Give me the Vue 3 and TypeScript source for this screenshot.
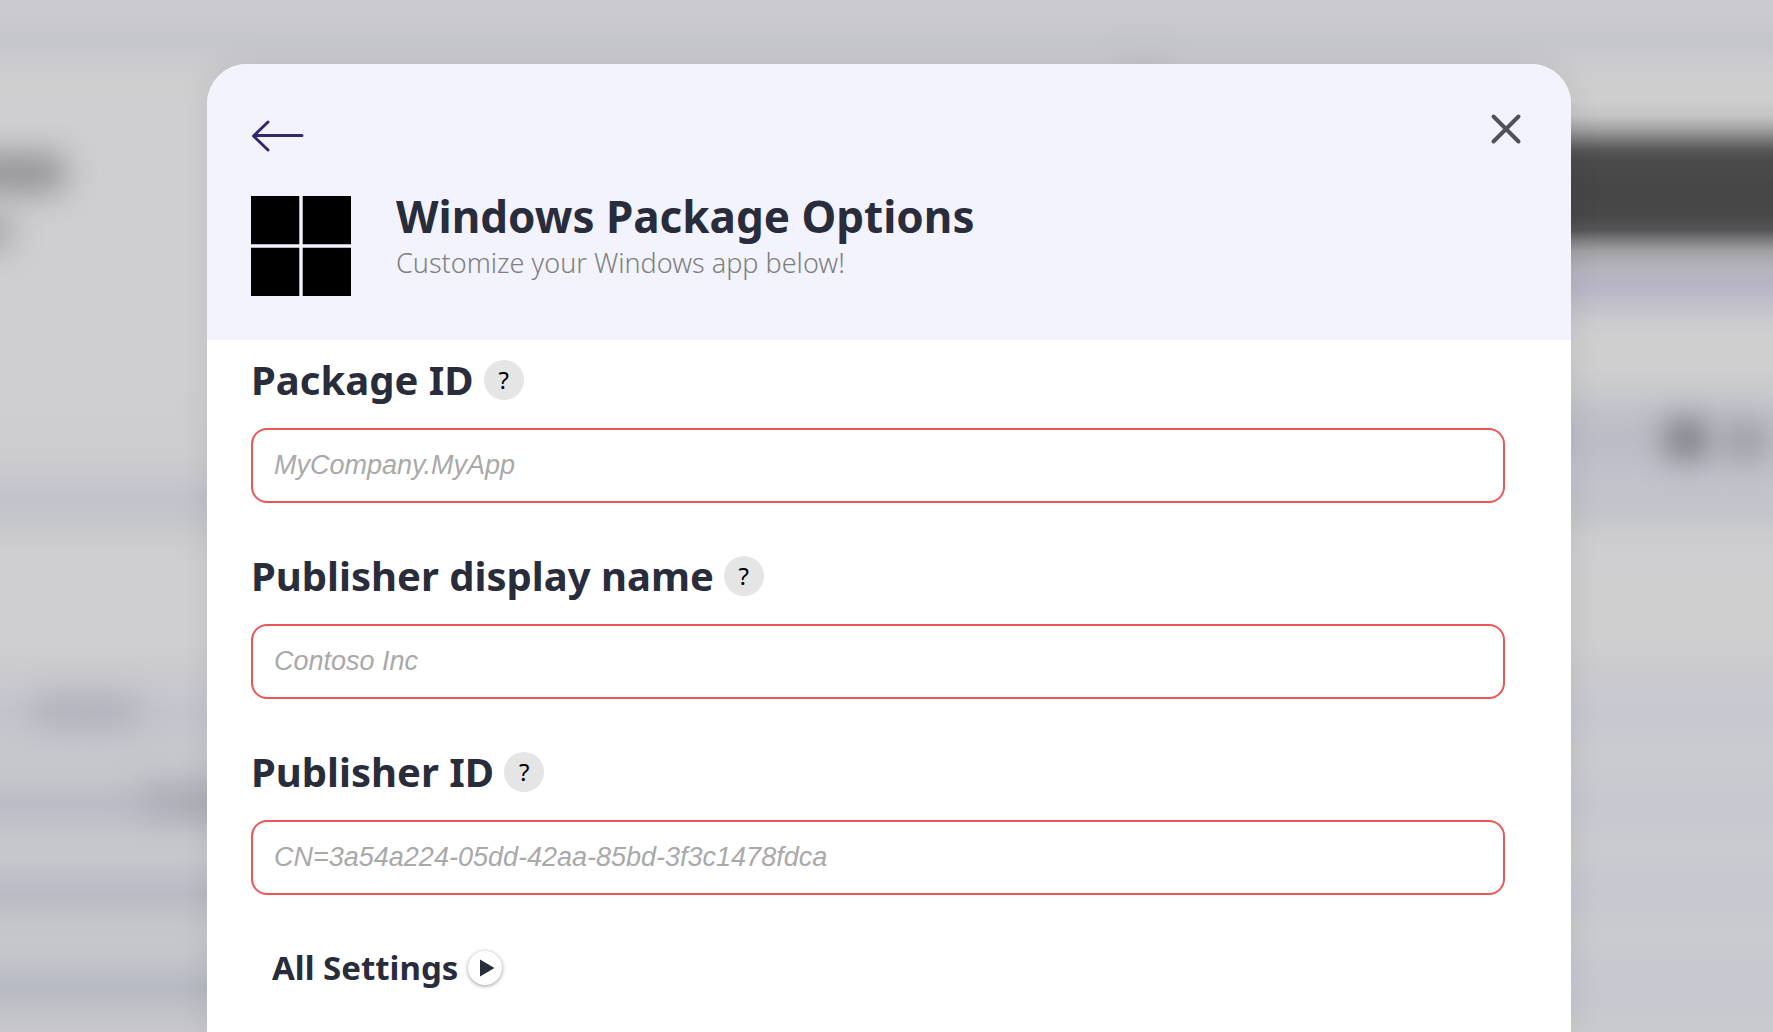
<script setup lang="ts">
import { ref } from 'vue'

interface Field {
  id: string
  label: string
  placeholder: string
}

const fields: Field[] = [
  { id: 'package-id', label: 'Package ID', placeholder: 'MyCompany.MyApp' },
  { id: 'publisher-name', label: 'Publisher display name', placeholder: 'Contoso Inc' },
  { id: 'publisher-id', label: 'Publisher ID', placeholder: 'CN=3a54a224-05dd-42aa-85bd-3f3c1478fdca' },
]

const values = ref<Record<string, string>>({
  'package-id': '',
  'publisher-name': '',
  'publisher-id': '',
})
</script>

<template>
  <div class="page">
    <div class="backdrop" aria-hidden="true">
      <div class="pane pane-left"></div>
      <div class="pane pane-right"></div>
      <span class="blob heading-line"></span>
      <span class="blob heading-tail"></span>
      <span class="blob item-one"></span>
      <span class="blob item-two"></span>
      <span class="blob icon-one"></span>
      <span class="blob icon-two"></span>
      <span class="blob top-mark"></span>
    </div>

    <section class="dialog" role="dialog" aria-modal="true" aria-labelledby="dialog-title">
      <header class="dialog-header">
        <div class="nav-row">
          <button class="icon-button" type="button" aria-label="Back">
            <svg width="54" height="34" viewBox="0 0 54 34" fill="none" stroke="#34286b" stroke-width="3" stroke-linecap="round" stroke-linejoin="round">
              <path d="M51 16.5H3M17 3L2.500 17L17 31" />
            </svg>
          </button>
          <button class="icon-button close" type="button" aria-label="Close">
            <svg width="32" height="32" viewBox="0 0 32 32" fill="none" stroke="#50515b" stroke-width="4" stroke-linecap="round">
              <path d="M3.500 3.500L28.500 28.500M28.500 3.500L3.500 28.500" />
            </svg>
          </button>
        </div>
        <div class="title-row">
          <svg class="logo" width="100" height="100" viewBox="0 0 100 100" aria-hidden="true">
            <path d="M0 0H48.300V48.300H0ZM51.700 0H100V48.300H51.700ZM0 51.700H48.300V100H0ZM51.700 51.700H100V100H51.700Z" />
          </svg>
          <div class="titles">
            <h1 id="dialog-title">Windows Package Options</h1>
            <p>Customize your Windows app below!</p>
          </div>
        </div>
      </header>

      <form class="dialog-form" @submit.prevent>
        <div v-for="field in fields" :key="field.id" class="field">
          <div class="label-row">
            <label :for="field.id">{{ field.label }}</label>
            <button class="help" type="button" :aria-label="`About ${field.label}`">?</button>
          </div>
          <input :id="field.id" v-model="values[field.id]" type="text" :placeholder="field.placeholder" required />
        </div>
        <button class="all-settings" type="button">
          <span>All Settings</span>
          <span class="disclosure">
            <svg width="16" height="18" viewBox="0 0 16 18" aria-hidden="true">
              <path d="M1 0.500L15.500 9L1 17.500Z" fill="#292c3a" />
            </svg>
          </span>
        </button>
      </form>
    </section>
  </div>
</template>

<style>
body {
  margin: 0;
}
</style>

<style scoped>
.page {
  position: relative;
  box-sizing: border-box;
  height: 100vh;
  padding: 64px 202px 0 207px;
  overflow: hidden;
  font-family: "Noto Sans", "Open Sans", sans-serif;
  color: #292c3a;
}

.backdrop {
  position: absolute;
  inset: 0;
  display: flex;
  overflow: hidden;
  background: #cfcfd1;
}

.pane {
  flex: 1;
}

.pane-left {
  background: linear-gradient(
    #cccbd0 0, #c7c7cc 30px, #c6c7cb 42px, #cbcacf 62px, #cececf 80px, #cfcfd1 110px,
    #cfcfd1 380px, #cdcdcf 450px, #c8c8cd 475px, #c2c2cc 500px, #c5c6ca 520px, #cbcbce 538px,
    #cfcfd1 560px, #cfcfd1 642px, #cacace 675px, #c4c4cd 713px, #c7c8cc 753px, #c5c6ca 775px,
    #bbbcc6 805px, #c6c7cb 837px, #c7c8cc 857px, #b9bac4 894px, #c5c6ca 925px, #c7c7cb 942px,
    #c3c4c9 960px, #b7b9c3 987px, #c1c2c6 1012px, #c8c7cc 1032px
  );
}

.pane-right {
  background: linear-gradient(
    #cccbd0 0, #c7c7cc 30px, #c6c7cb 42px, #cbcacf 62px, #cececf 80px, #cececf 100px,
    #c4c4c5 116px, #a2a2a3 129px, #7a7a7b 140px, #585859 150px, #4b4b4c 160px, #464647 190px,
    #484849 215px, #555556 230px, #7c7c7e 240px, #a0a0a3 251px, #b3b2bc 267px, #b8b6c7 288px,
    #c3c2cb 308px, #cbcbce 323px, #cfcfd0 342px, #cececf 368px, #c8c9cc 393px, #bfc0c8 417px,
    #bbbcc5 440px, #c1c2cb 480px, #c4c5c9 515px, #cccccf 535px, #cfcfd1 561px, #cfcfd0 636px,
    #cacace 675px, #c7c7d0 715px, #cacbce 755px, #c7c7d0 804px, #cacbce 850px, #c6c7d0 893px,
    #cacbce 935px, #c6c7d0 982px, #c9cacd 1032px
  );
}

.blob {
  position: absolute;
  border-radius: 20px;
  filter: blur(16px);
}

.heading-line {
  left: -40px;
  top: 153px;
  width: 108px;
  height: 40px;
  background: #939395;
}

.heading-tail {
  left: -40px;
  top: 212px;
  width: 54px;
  height: 40px;
  background: #a5a5a7;
}

.item-one {
  left: 30px;
  top: 696px;
  width: 110px;
  height: 30px;
  background: #afafb9;
}

.item-two {
  left: 140px;
  top: 786px;
  width: 110px;
  height: 30px;
  background: #aaaab3;
}

.icon-one {
  right: 66px;
  top: 418px;
  width: 42px;
  height: 42px;
  background: #74767b;
}

.icon-two {
  right: 8px;
  top: 422px;
  width: 40px;
  height: 38px;
  background: #96979b;
}

.top-mark {
  right: 604px;
  top: 58px;
  width: 50px;
  height: 30px;
  background: #bcbdc2;
}

.dialog {
  position: relative;
  min-height: 100%;
  overflow: hidden;
  border-radius: 40px 40px 0 0;
  background: #fff;
  box-shadow: 0 0 32px rgba(0, 0, 0, 0.08);
}

.dialog-header {
  padding: 44px;
  background: #f2f3fc;
}

.nav-row {
  display: flex;
  align-items: flex-start;
  justify-content: space-between;
  height: 88px;
}

button {
  padding: 0;
  border: 0;
  background: none;
  color: inherit;
  font-family: inherit;
  cursor: pointer;
}

.icon-button {
  display: flex;
  margin-top: 11px;
}

.close {
  margin: 5px 5px 0 0;
}

.title-row {
  display: flex;
  gap: 45px;
}

.logo {
  flex: none;
}

h1 {
  margin: 0;
  font-size: 44px;
  line-height: 40px;
  font-weight: 700;
}

p {
  margin: 0;
  font-size: 27px;
  line-height: 54px;
  font-weight: 300;
  color: #808080;
}

.dialog-form {
  padding: 16px 66px 0 44px;
}

.field {
  margin-bottom: 49px;
}

.label-row {
  display: flex;
  align-items: center;
  gap: 10px;
  height: 48px;
  margin-bottom: 24px;
}

label {
  font-size: 40px;
  line-height: 48px;
  font-weight: 700;
}

.help {
  width: 40px;
  height: 40px;
  border-radius: 50%;
  background: #e5e5e5;
  color: #000;
  font-size: 24px;
  line-height: 40px;
}

input {
  display: block;
  box-sizing: border-box;
  width: 100%;
  height: 75px;
  padding: 0 21px;
  border: 2px solid #eb5757;
  border-radius: 16px;
  background: #fff;
  font-family: "Liberation Sans", Arial, sans-serif;
  font-size: 27px;
  outline: none;
}

input::placeholder {
  color: #a9a9a9;
  font-style: italic;
  opacity: 1;
}

.all-settings {
  display: flex;
  align-items: center;
  gap: 10px;
  margin: 0 0 40px 21px;
  font-size: 33px;
  line-height: 48px;
  font-weight: 700;
}

.disclosure {
  display: flex;
  align-items: center;
  justify-content: center;
  width: 34px;
  height: 34px;
  border-radius: 50%;
  background: #fff;
  box-shadow: 0 1px 4px rgba(0, 0, 0, 0.4);
}

.disclosure svg {
  margin-left: 3px;
}
</style>
